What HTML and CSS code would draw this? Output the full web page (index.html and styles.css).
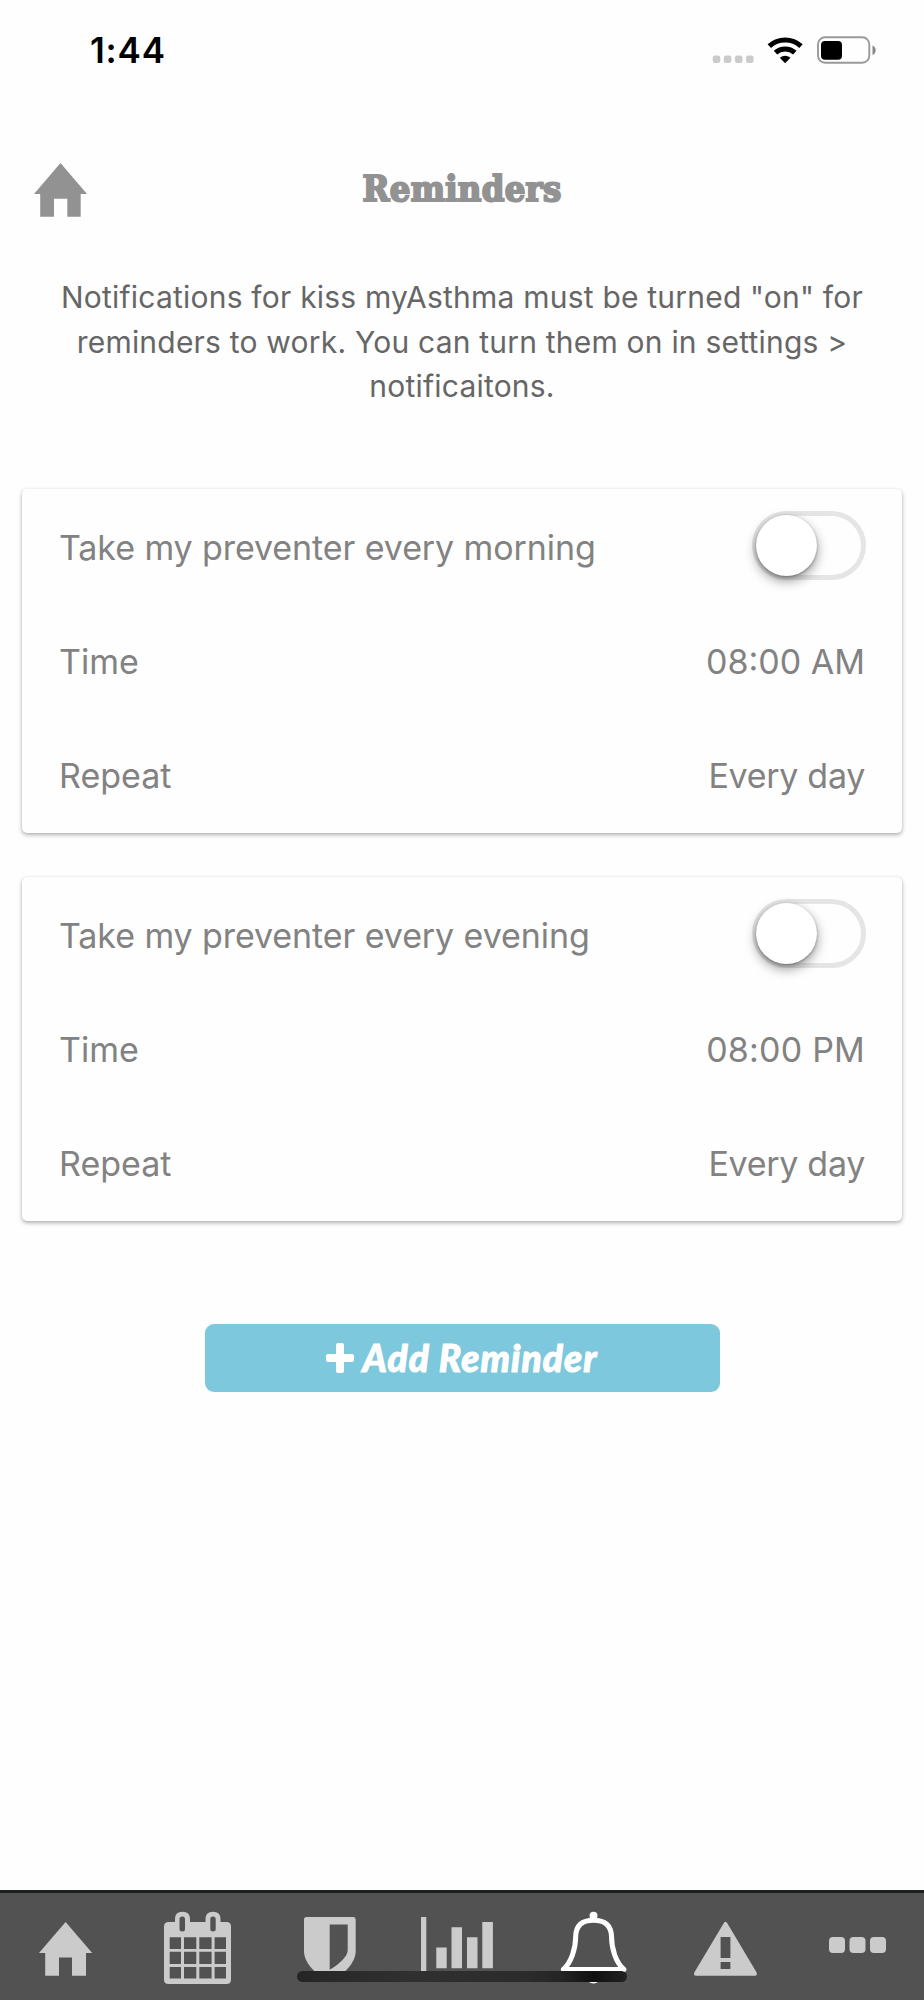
FILE: index.html
```html
<!DOCTYPE html>
<html lang="en">
<head>
<meta charset="utf-8">
<title>Reminders</title>
<link rel="stylesheet" href="styles.css">
</head>
<body>
<div class="screen">
  <div class="status">
    <span class="clock">1:44</span>
    <svg class="status-icons" width="166" height="30" viewBox="0 0 166 30">
      <g fill="#cbcbcb"><rect x="0.7" y="20.5" width="7.6" height="7.6" rx="2.4"/><rect x="11.8" y="20.5" width="7.6" height="7.6" rx="2.4"/><rect x="22.9" y="20.5" width="7.6" height="7.6" rx="2.4"/><rect x="34" y="20.5" width="7.6" height="7.6" rx="2.4"/></g>
      <g fill="none" stroke="#000" stroke-width="5"><path d="M57.3 11.2A23.5 23.5 0 0 1 89 11.2"/><path d="M63.5 17.7A14.2 14.2 0 0 1 82.8 17.7"/></g>
      <path d="M67.8 22.8Q73.1 18.6 78.5 22.8L73.1 28.3Z"/>
      <rect x="106" y="2.3" width="51.3" height="25.4" rx="7" fill="none" stroke="#999" stroke-width="1.9"/>
      <rect x="109" y="6" width="21" height="18.8" rx="4"/>
      <path d="M160.5 10.5Q163.7 12 163.7 15.2T160.5 20Z" fill="#888"/>
    </svg>
  </div>
  <header class="header">
    <svg class="home" width="54" height="54" viewBox="0 0 54 54"><path d="M26.5 0L53 31H46.7V53.7H33.3V35.7H20V53.7H6.2V31H0Z"/></svg>
    <h1 class="title">Reminders</h1>
  </header>
  <p class="note">Notifications for kiss myAsthma must be turned "on" for<br>reminders to work. You can turn them on in settings &gt;<br>notificaitons.</p>
  <main class="cards">
    <section class="card">
      <div class="row"><span class="long">Take my preventer every morning</span><span class="switch"><span class="knob"></span></span></div>
      <div class="row"><span>Time</span><span>08:00 AM</span></div>
      <div class="row"><span>Repeat</span><span class="repeat">Every day</span></div>
    </section>
    <section class="card">
      <div class="row"><span class="long">Take my preventer every evening</span><span class="switch"><span class="knob"></span></span></div>
      <div class="row"><span>Time</span><span class="pm">08:00 PM</span></div>
      <div class="row"><span>Repeat</span><span class="repeat">Every day</span></div>
    </section>
  </main>
  <button class="add">
    <svg width="28" height="30" viewBox="0 0 28 30"><path d="M12 0H16Q18 0 18 2V11H26Q28 11 28 13V17Q28 19 26 19H18V28Q18 30 16 30H12Q10 30 10 28V19H2Q0 19 0 17V13Q0 11 2 11H10V2Q10 0 12 0Z"/></svg>
    <span>Add Reminder</span>
  </button>
  <nav class="tabs">
    <svg viewBox="0 0 132 107"><path d="M65.6 29L92.2 60H86V82.8H72V64.6H59V82.8H45.2V60H39Z"/></svg>
    <svg viewBox="0 0 132 107"><path fill-rule="evenodd" d="M36.500 29H43V26Q43 18.700 50.500 18.700T58 26V29H73.500V26Q73.500 18.700 81 18.700T88.500 26V29H94.500Q99 29 99 33.500V86.500Q99 91 94.500 91H36.500Q32 91 32 86.500V33.500Q32 29 36.500 29ZM50.300 23.500Q47.500 23.500 47.500 26V36Q47.500 38.500 50.300 38.500T53 36V26Q53 23.500 50.300 23.500ZM81 23.500Q78.300 23.500 78.300 26V36Q78.300 38.500 81 38.500T83.700 36V26Q83.700 23.500 81 23.500ZM37.700 44.300V56H49V44.300ZM52 44.300V56H64.300V44.300ZM67.300 44.300V56H79.600V44.300ZM82.600 44.300V56H94V44.300ZM37.700 58.700V71H49V58.700ZM52 58.700V71H64.300V58.700ZM67.300 58.700V71H79.600V58.700ZM82.600 58.700V71H94V58.700ZM37.700 74V85.500H49V74ZM52 74V85.500H64.300V74ZM67.300 74V85.500H79.600V74ZM82.600 74V85.500H94V74Z"/></svg>
    <svg viewBox="0 0 132 107"><path fill-rule="evenodd" d="M42.500 24H89.500Q91.700 24 91.700 26.500V58C91.700 70 80 82 65.800 88C52 82 40 70 40 58V26.500Q40 24 42.500 24ZM65.700 31.500V76.700C77 70 83.700 63 83.700 57V31.500Z"/></svg>
    <svg viewBox="0 0 132 107"><path d="M25 24H30.300V83H101V88H25ZM40.300 54.500H50.700V75.200H40.300ZM55.500 34.200H66V75.200H55.500ZM71 44.300H81.500V75.200H71ZM86.300 29H96.900V75.200H86.300Z"/></svg>
    <svg viewBox="0 0 132 107" class="active"><circle cx="65.500" cy="22.700" r="4"/><path d="M35.300 76.500C43 70 47.700 56 47.700 43Q48.300 27.300 65.500 27.300T83.500 43C83.500 56 88 70 96 76.500Z" fill="none" stroke="#fff" stroke-width="5" stroke-linejoin="round"/><path d="M58 84Q60 90.500 65.500 90.500T73 84Z"/></svg>
    <svg viewBox="0 0 132 107"><path fill-rule="evenodd" d="M64 29.700Q65.500 27.700 67 29.700L96.600 79.500Q97.500 82.800 95 82.800H36Q33.300 82.800 34.300 79.500ZM60.600 44V65H70.400V44ZM60.600 69V76H70.400V69Z"/></svg>
    <svg viewBox="0 0 132 107"><rect x="37" y="44" width="16" height="16" rx="4"/><rect x="57.500" y="44" width="16" height="16" rx="4"/><rect x="78" y="44" width="16" height="16" rx="4"/></svg>
    <span class="indicator"></span>
  </nav>
</div>
</body>
</html>
```
FILE: styles.css
```css
* { box-sizing: border-box; }
body { margin: 0; background: #fefefe; font-family: Inter, "Liberation Sans", sans-serif; }
.screen { width: 924px; height: 2000px; display: flex; flex-direction: column; overflow: hidden; }
.status { height: 140px; padding: 34px 46px 0 90px; display: flex; justify-content: space-between; align-items: flex-start; }
.status-icons { margin-top: 1px; }
.clock { font-size: 35px; font-weight: 600; line-height: 32px; letter-spacing: 0.8px; color: #000; }
.header { height: 120px; padding: 23px 34px 0; display: grid; grid-template-columns: 54px 1fr 54px; align-items: start; }
.home { fill: #929292; }
.title { margin: 4px 0 0; text-align: center; font: bold 36px/42px "DejaVu Serif Condensed", "DejaVu Serif", serif; font-stretch: condensed; letter-spacing: 0.3px; color: #929292; -webkit-text-stroke: 2px #929292; }
.note { margin: 15px 0 0; text-align: center; font-size: 30px; line-height: 44.6px; letter-spacing: 0.21px; color: #666; white-space: nowrap; }
.cards { margin-top: 80px; padding: 0 22px; display: flex; flex-direction: column; gap: 44px; }
.card { height: 344px; padding: 2px 37px 0; border-radius: 5px; background: #fefefe; box-shadow: 0 2px 4px rgba(0,0,0,.3), 0 0 2px rgba(0,0,0,.08); color: #828282; font-size: 34px; }
.row { height: 114px; display: flex; align-items: center; justify-content: space-between; white-space: nowrap; }
.long { letter-spacing: -0.09px; }
.repeat { letter-spacing: -0.3px; }
.pm { letter-spacing: 0.2px; }
.switch { width: 114px; height: 69px; margin: 0 -1px 4px 0; border: 5px solid #e5e5e5; border-radius: 35px; }
.knob { display: block; width: 61px; height: 61px; margin: -1px; border-radius: 50%; background: #fff; box-shadow: 0 5px 12px rgba(0,0,0,.4), 0 1px 3px rgba(0,0,0,.3); }
.add { width: 515px; height: 68px; margin: 103px 0 0 204.500px; padding: 0; border: 0; border-radius: 9px; background: #7dc8dc; color: #fff; display: flex; align-items: center; justify-content: center; gap: 8px; font: italic 900 37px/40px Lato, sans-serif; letter-spacing: 1.1px; -webkit-text-stroke: 1px #fff; }
.add svg { fill: #fff; }
.tabs { position: relative; height: 110px; margin-top: auto; border-top: 3px solid #1b1f1f; background: #525252; display: flex; }
.tabs svg { width: 132px; height: 107px; fill: #cbcbcb; }
.tabs .active { fill: #fff; }
.indicator { position: absolute; left: 297px; top: 78px; width: 330px; height: 11px; border-radius: 6px; background: linear-gradient(90deg, #242424 0%, #292929 10%, #303030 35%, #2b2b2b 70%, #242424 80%, #101010 90%, #222 100%); }
```
